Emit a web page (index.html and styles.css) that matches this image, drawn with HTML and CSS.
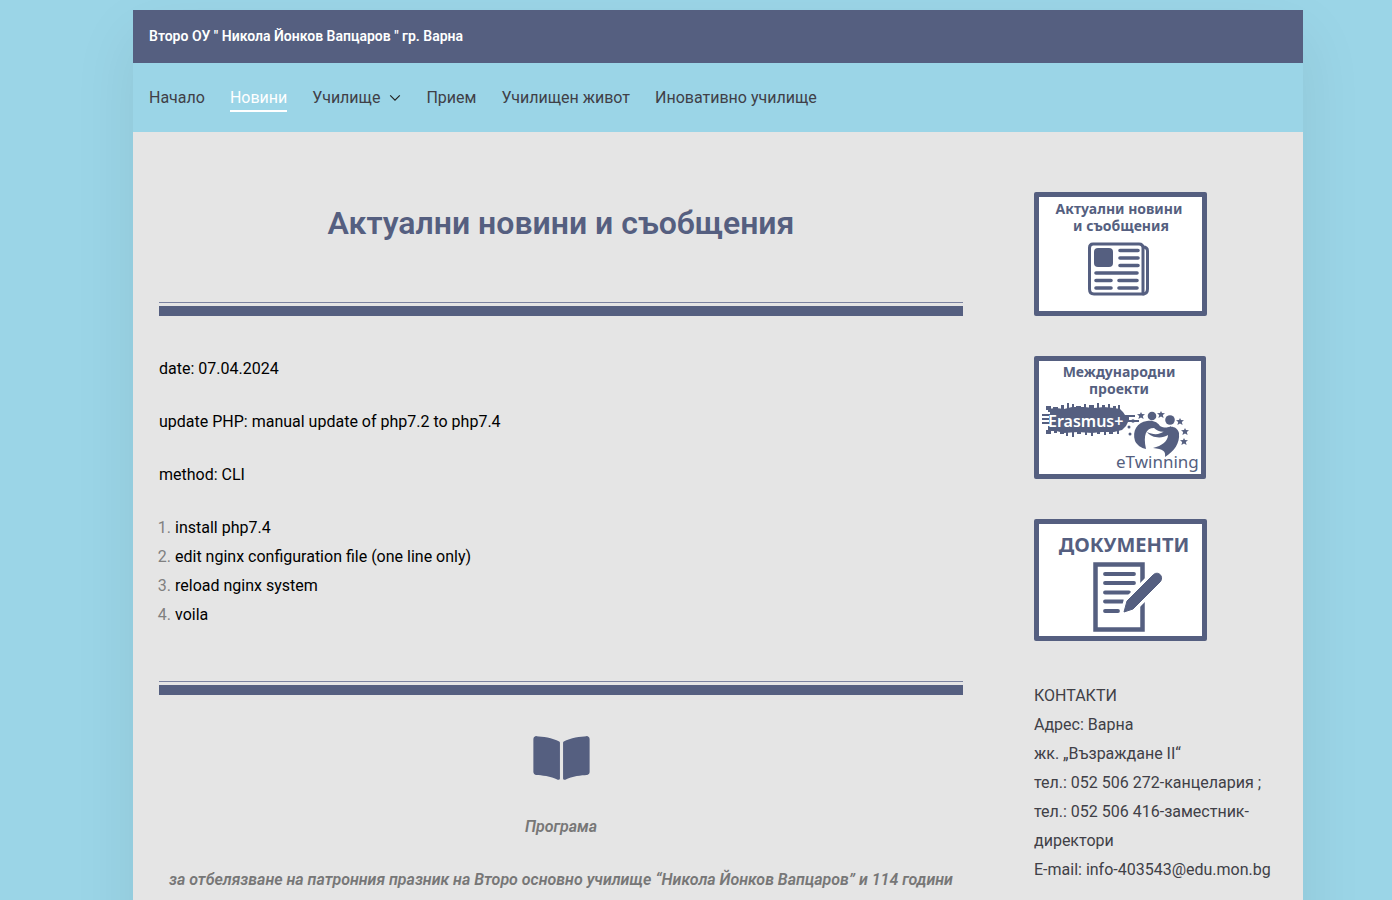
FILE: index.html
```html
<!DOCTYPE html>
<html lang="bg">
<head>
<meta charset="utf-8">
<meta name="viewport" content="width=device-width, initial-scale=1">
<title>Новини – Второ ОУ "Никола Йонков Вапцаров"</title>
<link rel="stylesheet" href="styles.css">
</head>
<body>
<div class="page">
  <header>
    <div class="brand"><a href="#">Второ ОУ " Никола Йонков Вапцаров " гр. Варна</a></div>
    <nav class="menu">
      <a href="#">Начало</a>
      <a href="#" class="current" aria-current="page">Новини</a>
      <a href="#" class="parent">Училище
        <svg class="chevron" viewBox="0 0 12 8" aria-hidden="true"><path d="M1.2 1.3 6 6.1l4.800-4.800" fill="none" stroke="#222" stroke-width="1.200"/></svg></a>
      <a href="#">Прием</a>
      <a href="#">Училищен живот</a>
      <a href="#">Иновативно училище</a>
    </nav>
  </header>
  <div class="columns">
    <main>
      <h1>Актуални новини и съобщения</h1>
      <hr class="divider">
      <section class="update">
        <p>date: 07.04.2024</p>
        <p>update PHP: manual update of php7.2 to php7.4</p>
        <p>method: CLI</p>
        <ol>
          <li><span>install php7.4</span></li>
          <li><span>edit nginx configuration file (one line only)</span></li>
          <li><span>reload nginx system</span></li>
          <li><span>voila</span></li>
        </ol>
      </section>
      <hr class="divider">
      <section class="program">
        <svg class="book" viewBox="0 0 576 512" aria-hidden="true"><path fill="#555f80" d="M542.22 32.05c-54.8 3.11-163.72 14.43-230.96 55.59-4.64 2.84-7.27 7.89-7.27 13.17v363.87c0 11.55 12.63 18.85 23.28 13.49 69.18-34.82 169.23-44.32 218.7-46.92 16.89-.89 30.02-14.43 30.02-30.66V62.75c.01-17.71-15.35-31.74-33.77-30.7zM264.73 87.64C197.5 46.48 88.58 35.17 33.78 32.05 15.36 31.01 0 45.04 0 62.75V400.6c0 16.24 13.13 29.78 30.02 30.66 49.49 2.6 149.59 12.11 218.77 46.95 10.62 5.35 23.21-1.94 23.21-13.46V100.63c0-5.29-2.62-10.14-7.27-12.99z"/></svg>
        <p>Програма</p>
        <p>за отбелязване на патронния празник на Второ основно училище “Никола Йонков Вапцаров” и 114 години</p>
      </section>
    </main>
    <aside>
      <a href="#" class="card">
        <svg width="173" height="124" viewBox="0 0 173 124" role="img" aria-label="Актуални новини и съобщения">
          <rect width="173" height="124" rx="2" fill="#555f80"/>
          <rect x="5" y="5" width="163" height="114" fill="#fff"/>
          <g class="label"><text x="85" y="22">Актуални новини</text><text x="87" y="39">и съобщения</text></g>
          <g fill="none" stroke="#555f80" stroke-width="3">
            <path d="M59 52h46q4 0 4 4v46H60q-4.500 0-4.500-5V56q0-4 3.500-4z"/>
            <path d="M109 55q4.500 0 4.500 4v38q0 5-5 5"/>
          </g>
          <rect x="60" y="56" width="19" height="19" rx="4" fill="#555f80"/>
          <path d="M86 58.500h18M86 66h18M86 73.500h18M62 81h41M62 88.500h15M85 88.500h18M62 96h15M85 96h18" stroke="#555f80" stroke-width="3.600" stroke-linecap="round"/>
        </svg>
      </a>
      <a href="#" class="card">
        <svg width="172" height="123" viewBox="0 0 172 123" role="img" aria-label="Международни проекти Erasmus+ eTwinning">
          <rect width="172" height="123" rx="2" fill="#555f80"/>
          <rect x="5" y="5" width="162" height="113" fill="#fff"/>
          <g class="label"><text x="85" y="21">Международни</text><text x="85" y="38">проекти</text></g>
          <g fill="#555f80">
            <path d="M14 53l8-1 8 1 8-2h12l10 1 10-1 10 1 6 1 3 3 2 3h10v2h-6v3h10v2H94l-2 4-4 4-8 2H68l-10 1-14-1-14 1-8-2h-8v-5h2v-2H8v-2h7v-2H8v-2h7v-2H8v-2h8v-2h-2z"/>
            <path d="M12 50h5v4h-5zM19 51h5v4h-5zM27 49h3v4h-3zM33 47h2v7h-2zM38 48h2v5h-2zM42 50h5v3h-5zM50 48h2v5h-2zM55 49h5v4h-5zM63 47h2v6h-2zM68 49h3v4h-3zM74 48h2v5h-2zM79 50h3v4h-3zM84 49h2v5h-2zM12 74h5v4h-5zM20 74h3v3h-3zM26 74h4v4h-4zM32 74h2v6h-2zM38 74h2v7h-2zM43 74h4v4h-4zM51 74h2v5h-2zM57 74h2v6h-2zM63 74h3v4h-3zM70 74h2v5h-2zM75 74h4v4h-4zM83 73h2v5h-2z"/>
          </g>
          <text class="erasmus" x="14" y="71">Erasmus+</text>
          <g fill="#555f80">
            <circle cx="118" cy="60" r="4.300"/><circle cx="136" cy="64" r="4.800"/>
            <path d="M101 85C98 75 103 66 113 65c7-1 11 2 13 5 4 2 8 2 11 0l-1 4c-6 3-12 2-16-2-8 0-11 7-8 21-5-1-9-4-11-8z"/>
            <path d="M130 75c3-6 13-6 15 2 1 11-5 18-14 24 1-6-2-8-12-9 9-2 15-7 15-13-6 4-17 3-21-3 6 3 13 3 17-1z"/>
            <path id="star" d="M107 56l1 2 3 .2-2.200 1.800.8 3-2.600-1.600-2.600 1.600.8-3-2.200-1.800 3-.2z"/>
            <use href="#star" x="20" y="-1"/><use href="#star" x="39" y="6"/><use href="#star" x="44" y="16"/><use href="#star" x="43" y="26"/>
            <circle cx="99" cy="65" r="1.800"/><circle cx="95" cy="71" r="1.500"/><circle cx="96" cy="78" r="1.500"/>
          </g>
          <text class="etwinning" x="82" y="112">eTwinning</text>
        </svg>
      </a>
      <a href="#" class="card">
        <svg width="173" height="122" viewBox="0 0 173 122" role="img" aria-label="Документи">
          <rect width="173" height="122" rx="2" fill="#555f80"/>
          <rect x="5" y="5" width="163" height="112" fill="#fff"/>
          <text class="docs" x="90" y="33">ДОКУМЕНТИ</text>
          <rect x="61.500" y="45.500" width="47" height="65" fill="none" stroke="#555f80" stroke-width="4.500"/>
          <path d="M71 55h29M71 64h29M71 73.500h24M71 82.500h18M71 92h13" stroke="#555f80" stroke-width="3.800" stroke-linecap="round"/>
          <path d="M93 82l26.500-26.500c5-4 10.500 2 7 7L99 90l-9 3z" fill="#555f80" stroke="#fff" stroke-width="7"/>
          <path d="M93 82l26.500-26.500c5-4 10.500 2 7 7L99 90l-9 3z" fill="#555f80" stroke="#555f80" stroke-width="1"/>
        </svg>
      </a>
      <address>
        КОНТАКТИ<br>
        Адрес: Варна<br>
        жк. „Възраждане II“<br>
        тел.: 052 506 272-канцелария ;<br>
        тел.: 052 506 416-заместник-директори<br>
        E-mail: info-403543@edu.mon.bg
      </address>
    </aside>
  </div>
</div>
</body>
</html>
```
FILE: styles.css
```css
* { box-sizing: border-box; }

body {
  margin: 0;
  padding: 10px 0 0 44px;
  background: #9bd5e7;
  color: #404047;
  font: 16px/29px Roboto, "Noto Sans", sans-serif;
}

a { color: inherit; text-decoration: none; }

.page {
  max-width: 1170px;
  margin: 0 auto;
  background: #e5e5e5;
  box-shadow: 0 25px 60px rgba(0, 0, 0, 0.08);
}

.brand {
  padding: 12px 16px;
  background: #555f80;
  color: #fff;
  font-size: 14px;
  font-weight: 600;
}

.menu {
  display: flex;
  flex-wrap: wrap;
  gap: 25px;
  padding: 20px 16px;
  background: #9bd5e7;
}

.current {
  color: #fff;
  box-shadow: inset 0 -2px #fff;
}

.parent { display: flex; align-items: center; gap: 9px; }
.chevron { width: 12px; height: 8px; }

.columns {
  display: grid;
  grid-template-columns: minmax(0, 1fr) 243px;
  gap: 71px;
  padding: 60px 26px;
}

h1 {
  margin: 0;
  padding: 10px 0;
  color: #555f80;
  font-size: 32px;
  line-height: 42px;
  font-weight: 600;
  text-align: center;
}

.divider {
  height: 14px;
  margin: 48px 0 38px;
  padding-top: 3px;
  border: 0;
  border-top: 1px solid #7a82a0;
  background: #555f80 content-box;
}

.update { color: #000; }
p { margin: 0 0 24px; }

ol {
  margin: 0;
  padding-left: 16px;
  color: #808080;
}
li span { color: #000; }

.update + .divider { margin-top: 52px; }

.program {
  color: #777;
  font-weight: 600;
  font-style: italic;
  text-align: center;
}

.book {
  display: block;
  width: 57px;
  height: 50px;
  margin: 0 auto 29px;
}

aside {
  display: flex;
  flex-direction: column;
  align-items: flex-start;
  gap: 40px;
}

.card, .card svg { display: block; }

.card text { fill: #555f80; font-family: "Noto Sans", sans-serif; }
.card .label { font-size: 14px; font-weight: 700; text-anchor: middle; }
.card .erasmus { fill: #fff; font-size: 16px; font-weight: 600; }
.card .etwinning { font-size: 17px; }
.card .docs { font-size: 20px; font-weight: 700; text-anchor: middle; }

address { font-style: normal; }
```
